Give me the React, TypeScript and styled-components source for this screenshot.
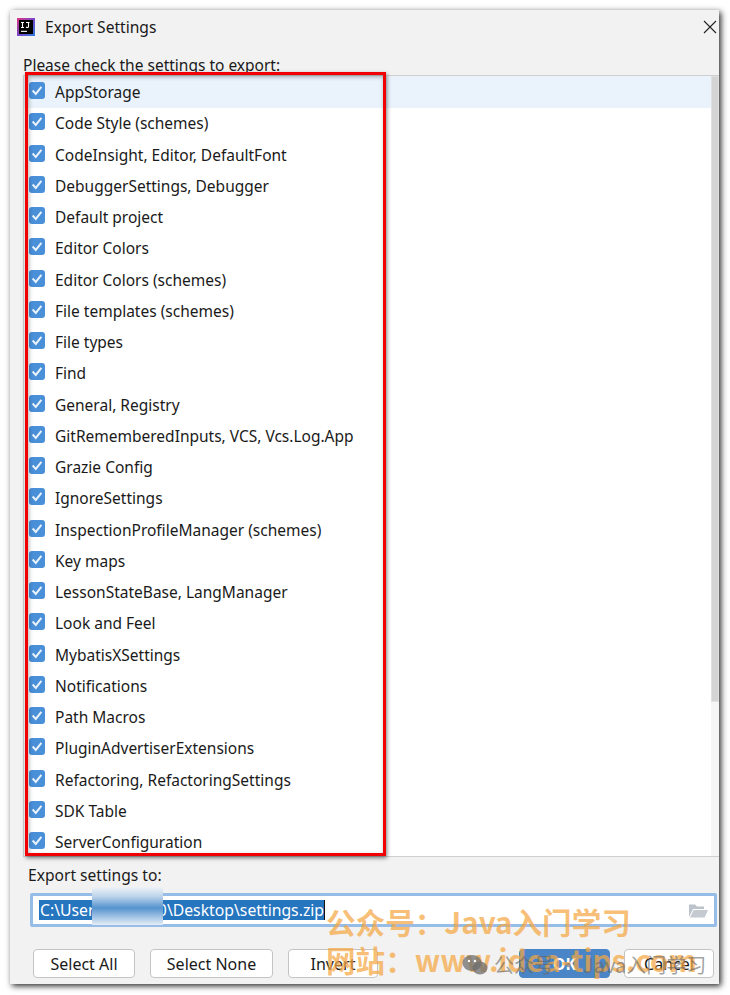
import styled, { createGlobalStyle } from 'styled-components';

const items = [
  'AppStorage',
  'Code Style (schemes)',
  'CodeInsight, Editor, DefaultFont',
  'DebuggerSettings, Debugger',
  'Default project',
  'Editor Colors',
  'Editor Colors (schemes)',
  'File templates (schemes)',
  'File types',
  'Find',
  'General, Registry',
  'GitRememberedInputs, VCS, Vcs.Log.App',
  'Grazie Config',
  'IgnoreSettings',
  'InspectionProfileManager (schemes)',
  'Key maps',
  'LessonStateBase, LangManager',
  'Look and Feel',
  'MybatisXSettings',
  'Notifications',
  'Path Macros',
  'PluginAdvertiserExtensions',
  'Refactoring, RefactoringSettings',
  'SDK Table',
  'ServerConfiguration',
];

const GlobalStyle = createGlobalStyle`
  html, body {
    margin: 0;
    padding: 0;
    background: #fff;
  }
  body {
    font-family: "Noto Sans", "Open Sans", "Noto Sans CJK SC", sans-serif;
    color: #1a1a1a;
  }
`;

const S = {
  Page: styled.div`
    position: relative;
    width: 730px;
    height: 995px;
    padding: 10px 11px 11px 10px;
    box-sizing: border-box;
    overflow: hidden;
  `,
  Dialog: styled.div`
    display: flex;
    flex-direction: column;
    height: 100%;
    background: #f2f2f2;
    box-shadow: 2px 2px 6px rgba(0, 0, 0, 0.85);
  `,
  TitleBar: styled.div`
    display: flex;
    align-items: center;
    gap: 10px;
    height: 36px;
    padding: 0 2px 2px 7px;
    box-sizing: border-box;
    flex-shrink: 0;
  `,
  Title: styled.div`
    flex: 1;
    font-size: 15.6px;
  `,
  CheckLabel: styled.div`
    height: 29px;
    padding: 10px 0 0 13px;
    box-sizing: border-box;
    font-size: 15.5px;
    line-height: 18px;
    flex-shrink: 0;
  `,
  ListWrap: styled.div`
    display: flex;
    height: 782px;
    margin-left: 13px;
    flex-shrink: 0;
    background: #fff;
    border-top: 1px solid #cfcfcf;
    border-left: 1px solid #cfcfcf;
    border-bottom: 1px solid #cfcfcf;
    box-sizing: border-box;
  `,
  List: styled.div`
    flex: 1;
    overflow: hidden;
    padding-top: 0.4px;
  `,
  Row: styled.div<{ $active?: boolean }>`
    display: flex;
    align-items: center;
    gap: 10px;
    height: 31.25px;
    padding: 0 0 0 5px;
    font-size: 15.5px;
    background: ${(p) => (p.$active ? '#eaf3fc' : 'transparent')};
  `,
  RowBox: styled.div`
    display: flex;
    margin-top: -3px;
  `,
  Track: styled.div`
    width: 8px;
    background: #f5f5f5;
    flex-shrink: 0;
  `,
  Thumb: styled.div`
    height: 626px;
    box-sizing: border-box;
    background: #d4d4d4;
    border: 1px solid #e0e0e0;
  `,
  Footer: styled.div`
    display: flex;
    flex-direction: column;
    flex: 1;
    padding: 8px 2px 0 18px;
  `,
  ExportLabel: styled.div`
    font-size: 15.6px;
    line-height: 20px;
    margin-bottom: 8px;
  `,
  PathField: styled.div`
    display: flex;
    align-items: center;
    justify-content: space-between;
    height: 34px;
    margin-left: 2px;
    padding: 0 6px 0 6px;
    box-sizing: border-box;
    background: #fff;
    border: 3px solid #95bde8;
    border-radius: 2px;
  `,
  Selected: styled.span`
    background: #2675bf;
    color: #fff;
    font-size: 15.75px;
    line-height: 20px;
    padding-left: 1px;
    border-right: 1px solid #111;
  `,
  Buttons: styled.div`
    display: flex;
    align-items: center;
    margin: 22px 3px 0 5px;
  `,
  Button: styled.div<{ $w: number; $primary?: boolean }>`
    display: flex;
    align-items: center;
    justify-content: center;
    width: ${(p) => p.$w}px;
    height: 29px;
    box-sizing: border-box;
    font-size: 16px;
    border-radius: 4px;
    background: ${(p) => (p.$primary ? '#4a86c7' : '#fff')};
    color: ${(p) => (p.$primary ? '#fff' : '#1a1a1a')};
    font-weight: ${(p) => (p.$primary ? 700 : 400)};
    border: 1px solid ${(p) => (p.$primary ? '#4a86c7' : '#c4c4c4')};
  `,
  Gap: styled.div<{ $w: number }>`
    width: ${(p) => p.$w}px;
    flex-shrink: 0;
  `,
  RedBox: styled.div`
    position: absolute;
    left: 25px;
    top: 72px;
    width: 361px;
    height: 784px;
    box-sizing: border-box;
    border: 3px solid #f00000;
    box-shadow: 1px 2px 4px rgba(0, 0, 0, 0.5), inset 1px 2px 4px rgba(0, 0, 0, 0.3);
    pointer-events: none;
  `,
  Blur: styled.div`
    position: absolute;
    left: 92px;
    top: 887px;
    width: 71px;
    height: 38px;
    background: linear-gradient(
      180deg,
      #f0f3f7 0%,
      #bcd3ea 25%,
      #5593cf 55%,
      #a6c6e6 80%,
      #e6edf5 100%
    );
  `,
  Mark: styled.div<{ $x: number; $y: number }>`
    position: absolute;
    left: ${(p) => p.$x}px;
    top: ${(p) => p.$y}px;
    font-size: 29.6px;
    line-height: 34px;
    font-weight: 700;
    white-space: nowrap;
    color: rgba(245, 166, 66, 0.72);
    font-family: "Noto Sans CJK SC", "Noto Sans", sans-serif;
  `,
  SubMark: styled.div`
    position: absolute;
    left: 462px;
    top: 952px;
    display: flex;
    align-items: center;
    gap: 6px;
    font-size: 20px;
    line-height: 26px;
    white-space: nowrap;
    color: rgba(100, 100, 100, 0.6);
    font-family: "Noto Sans CJK SC", "Noto Sans", sans-serif;
  `,
};

const AppLogo = () => (
  <svg width="18" height="18" viewBox="0 0 18 18">
    <defs>
      <linearGradient id="ij" x1="0" y1="0" x2="1" y2="1">
        <stop offset="0" stopColor="#e0337f" />
        <stop offset="0.5" stopColor="#7a45c9" />
        <stop offset="1" stopColor="#2d7fe0" />
      </linearGradient>
    </defs>
    <rect width="18" height="18" fill="url(#ij)" />
    <rect x="2" y="2" width="14" height="14" fill="#000" />
    <path d="M4 4.5h3M5.5 4.5v5M4 9.5h3M9 4.5h3.5M11.5 4.5v4.2c0 1-1.6 1-2.4.3" stroke="#fff" strokeWidth="1.1" fill="none" />
    <rect x="4" y="12.8" width="6" height="1.1" fill="#fff" />
  </svg>
);

const CloseIcon = () => (
  <svg width="14" height="14" viewBox="0 0 14 14">
    <path d="M1 1l12 12M13 1L1 13" stroke="#222" strokeWidth="1.1" />
  </svg>
);

const CheckBox = () => (
  <svg width="16" height="17" viewBox="0 0 16 17">
    <rect width="16" height="17" rx="3" fill="#4a90d9" />
    <path d="M3.6 8.5l3.2 3.4L12.4 4.8" stroke="#eaf2fa" strokeWidth="2" fill="none" />
  </svg>
);

const FolderIcon = () => (
  <svg width="20" height="15" viewBox="0 0 20 15">
    <path d="M1 14V1.5h6l2 2h7V6H5L1 14z" fill="#bcc3ca" />
    <path d="M5.6 7H20l-3.4 7.5H2z" fill="#c4cad0" />
  </svg>
);

const WeChatIcon = () => (
  <svg width="26" height="22" viewBox="0 0 26 22">
    <ellipse cx="10" cy="9" rx="9.5" ry="8" fill="rgba(110,110,110,0.75)" />
    <ellipse cx="18" cy="14" rx="7.5" ry="6.5" fill="rgba(110,110,110,0.75)" />
    <circle cx="7" cy="7" r="1.2" fill="#fff" />
    <circle cx="13" cy="7" r="1.2" fill="#fff" />
  </svg>
);

const App = () => {
  return (
    <S.Page>
      <GlobalStyle />
      <S.Dialog>
        <S.TitleBar>
          <AppLogo />
          <S.Title>Export Settings</S.Title>
          <CloseIcon />
        </S.TitleBar>
        <S.CheckLabel>Please check the settings to export:</S.CheckLabel>
        <S.ListWrap>
          <S.List>
            {items.map((item, i) => (
              <S.Row key={item} $active={i === 0}>
                <S.RowBox>
                  <CheckBox />
                </S.RowBox>
                <span>{item}</span>
              </S.Row>
            ))}
          </S.List>
          <S.Track>
            <S.Thumb />
          </S.Track>
        </S.ListWrap>
        <S.Footer>
          <S.ExportLabel>Export settings to:</S.ExportLabel>
          <S.PathField>
            <S.Selected>C:\Users\xxxxxx0\Desktop\settings.zip</S.Selected>
            <FolderIcon />
          </S.PathField>
          <S.Buttons>
            <S.Button $w={102}>Select All</S.Button>
            <S.Gap $w={15} />
            <S.Button $w={123}>Select None</S.Button>
            <S.Gap $w={15} />
            <S.Button $w={90}>Invert</S.Button>
            <S.Gap $w={141} />
            <S.Button $w={91} $primary>OK</S.Button>
            <S.Gap $w={14} />
            <S.Button $w={90}>Cancel</S.Button>
          </S.Buttons>
        </S.Footer>
      </S.Dialog>
      <S.RedBox />
      <S.Blur />
      <S.Mark $x={326} $y={905}>公众号：Java入门学习</S.Mark>
      <S.Mark $x={326} $y={943}>网站：www.idea-tips.com</S.Mark>
      <S.SubMark>
        <WeChatIcon />
        公众号 · Java入门学习
      </S.SubMark>
    </S.Page>
  );
};

export default App;
